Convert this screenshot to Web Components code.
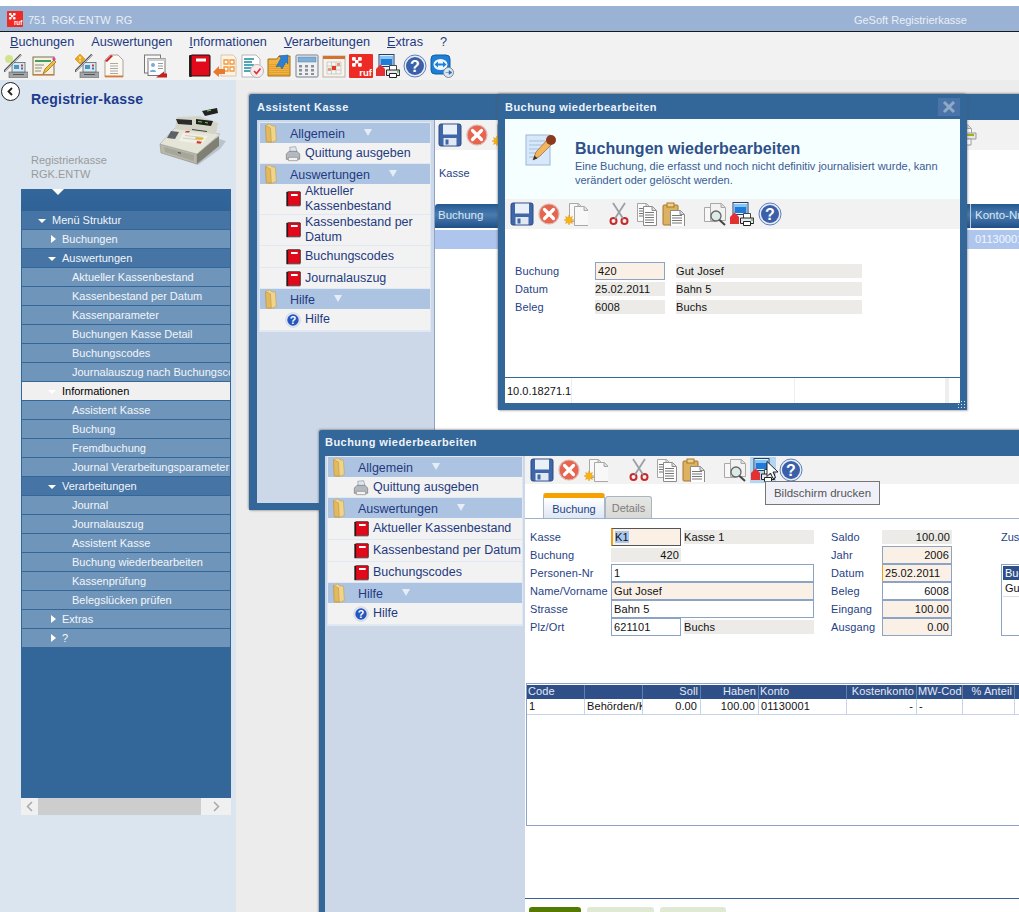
<!DOCTYPE html>
<html lang="de">
<head>
<meta charset="utf-8">
<title>GeSoft Registrierkasse</title>
<style>
html,body{margin:0;padding:0;background:#fff;overflow:hidden}
body{font:11px "Liberation Sans",Arial,sans-serif;color:#111}
</style>
</head>
<body>
<rg-app>
  <rg-titlebar slot="top" heading="751  RGK.ENTW  RG" product="GeSoft Registrierkasse"></rg-titlebar>
  <rg-menubar slot="top"></rg-menubar>
  <rg-maintools slot="top"></rg-maintools>
  <rg-sidebar slot="side"></rg-sidebar>

  <rg-window slot="desk" heading="Assistent Kasse" style="--x:13px;--y:14px;--w:800px;--h:416px;--pad:8px;--head:26px">
    <rg-split style="--pane:177px;--panepad:3px 4px 3px 3px">
      <rg-nav slot="pane">
        <rg-nav-head>Allgemein</rg-nav-head>
        <rg-nav-item icon="printer">Quittung ausgeben</rg-nav-item>
        <rg-nav-head>Auswertungen</rg-nav-head>
        <rg-nav-item icon="book">Aktueller Kassenbestand</rg-nav-item>
        <rg-nav-item icon="book">Kassenbestand per Datum</rg-nav-item>
        <rg-nav-item icon="book">Buchungscodes</rg-nav-item>
        <rg-nav-item icon="book">Journalauszug</rg-nav-item>
        <rg-nav-head>Hilfe</rg-nav-head>
        <rg-nav-item icon="helpball">Hilfe</rg-nav-item>
      </rg-nav>
      <rg-assist-main></rg-assist-main>
    </rg-split>
  </rg-window>

  <rg-window slot="desk" heading="Buchung wiederbearbeiten" closable style="--x:262px;--y:14px;--w:469px;--h:316px;--pad:7px;--head:25px;--shadow:1px">
    <rg-modal-body></rg-modal-body>
  </rg-window>

  <rg-window slot="desk" heading="Buchung wiederbearbeiten" style="--x:83px;--y:350px;--w:800px;--h:520px;--pad:6px;--head:26px;--hb:2px">
    <rg-split style="--pane:200px;--panepad:1px 3px">
      <rg-nav slot="pane">
        <rg-nav-head>Allgemein</rg-nav-head>
        <rg-nav-item icon="printer">Quittung ausgeben</rg-nav-item>
        <rg-nav-head>Auswertungen</rg-nav-head>
        <rg-nav-item icon="book">Aktueller Kassenbestand</rg-nav-item>
        <rg-nav-item icon="book">Kassenbestand per Datum</rg-nav-item>
        <rg-nav-item icon="book">Buchungscodes</rg-nav-item>
        <rg-nav-head>Hilfe</rg-nav-head>
        <rg-nav-item icon="helpball">Hilfe</rg-nav-item>
      </rg-nav>
      <rg-booking-main></rg-booking-main>
    </rg-split>
    <rg-tooltip style="--x:446px;--y:51px">Bildschirm drucken</rg-tooltip>
    <rg-cursor style="--x:447px;--y:31px"></rg-cursor>
  </rg-window>
</rg-app>

<script>
const FONT='"Liberation Sans",Arial,sans-serif';
const define=(name,css,html)=>{
  class C extends HTMLElement{
    constructor(){super();this.attachShadow({mode:'open'}).innerHTML=`<style>${css}</style>${typeof html==='string'?html:''}`;}
    connectedCallback(){
      if(typeof html==='function'){
        const s=document.createElement('div');s.innerHTML=html(this);
        this.shadowRoot.append(...s.childNodes);
      }
    }
  }
  customElements.define(name,C);
};

/* ---------- icons ---------- */
const doc=(x,y,w,h,f='#f8f8f8',s='#a8a8a8')=>`<path d="M${x+.5} ${y+.5}h${w-4}l4 4v${h-4}h-${w}z" fill="${f}" stroke="${s}"/><path d="M${x+w-4} ${y+.5}v4h4" fill="#ddd" stroke="${s}"/>`;
const lines=(x,y,w,n,c='#777',st=2.5)=>{let o='';for(let i=0;i<n;i++)o+=`<path d="M${x} ${y+i*st+.5}h${w}" stroke="${c}"/>`;return o;};
const printer=`<path d="M13.500 11.500h7v5h-7z" fill="#fff" stroke="#444"/><path d="M10.500 16h13.200v5.500H10.500z" fill="#e6e9ec" stroke="#222"/><path d="M13.500 19.500h7v4h-7z" fill="#fff" stroke="#222"/><circle cx="22" cy="17.800" r=".9" fill="#3b3"/>`;
const register=`<rect x="5" y="18" width="19" height="6" fill="#a2a4a6" stroke="#666" stroke-width=".6"/><path d="M9 20.500h11" stroke="#555"/><rect x="8" y="8.500" width="13" height="9.500" fill="#d5e8ee" stroke="#59666e" stroke-width=".8"/><rect x="10" y="11" width="5" height="4" fill="#4f93c4"/><path d="M17 10.500h2v2h-2z" fill="#c93a3a"/><path d="M17 13.500h2v2h-2z" fill="#3a6fc9"/>`;
const pen=`<path d="M0 17.500L17 .5" stroke="#555" stroke-width="2"/><path d="M1 17L17 1" stroke="#e8e8e8" stroke-width=".7"/>`;
const ICONS={
 save:`<rect x="1" y="1" width="22" height="22" rx="2" fill="#3f66a8" stroke="#2c4b85"/><rect x="5" y="1.500" width="14" height="10" fill="#eaf0f8"/><rect x="5.500" y="15" width="13" height="7.500" fill="#e2e8f2"/><rect x="7.500" y="16.500" width="3" height="5" fill="#3f66a8"/>`,
 cancel:`<circle cx="12" cy="12" r="10" fill="#e8644f" stroke="#d9b8b0" stroke-width="1.200"/><path d="M7.500 7.500l9 9m0-9l-9 9" stroke="#fff" stroke-width="3.200" stroke-linecap="round"/>`,
 newdoc:`${doc(5,1,13,18)}${doc(10,4,14,19)}<path d="M5 13l1 2.500 2.500-1-1 2.500 2.500 1-2.500 1 1 2.500-2.500-1-1 2.500-1-2.500-2.500 1 1-2.500-2.500-1 2.500-1-1-2.500 2.500 1z" fill="#f7b416" stroke="#e58a00" stroke-width=".4"/>`,
 cut:`<circle cx="6.500" cy="19" r="3" fill="none" stroke="#c62b2b" stroke-width="2"/><circle cx="17.500" cy="19" r="3" fill="none" stroke="#c62b2b" stroke-width="2"/><path d="M8 16.500L18 1M16 16.500L6 1" stroke="#9a9fa8" stroke-width="1.800"/>`,
 copy:`${doc(3,1,13,18,'#fafafa','#a5a5a5')}${lines(5,6,7,4)}${doc(9,4,13,19,'#fdfdfd','#8c8c8c')}${lines(11,10,9,5)}`,
 paste:`<rect x="2" y="3" width="15" height="20" rx="1" fill="#dcb160" stroke="#a5782b"/><rect x="6" y="1" width="7" height="4" fill="#eed18d" stroke="#a5782b"/>${doc(9,8,14,16,'#fdfdfd','#8c8c8c')}${lines(11,13,10,4)}`,
 preview:`${doc(1,5,11,14)}${doc(7,1,15,17,'#f2f2f2')}<circle cx="13" cy="14" r="5" fill="#dcebe6" stroke="#666" stroke-width="1.300"/><path d="M16.500 18l5.500 5" stroke="#444" stroke-width="2"/>`,
 screen:`<rect x="3" y=".5" width="15" height="12" fill="#e8eef6" stroke="#24406e"/><path d="M4.500 2h12v9h-12z" fill="#1f7ad8"/><path d="M4.500 2h12v3h-12z" fill="#86c6f7"/><path d="M0 15l4.500-4.500L9 15v7H0z" fill="#e33030"/>${printer}`,
 help:`<circle cx="12" cy="12" r="11" fill="#e9eef8" stroke="#5c7fbb"/><circle cx="12" cy="12" r="9" fill="#3b5fa9"/><text x="12" y="17.500" font-family="Liberation Sans" font-weight="bold" font-size="16" fill="#fff" text-anchor="middle">?</text>`,
 printdoc:`${doc(3,1,15,10)}<path d="M1 10h22v6H1z" fill="#e7e7e7" stroke="#999"/><path d="M3 11h18v2H3z" fill="#a8ae18"/><path d="M6 16h12v6H6z" fill="#fff" stroke="#999"/>`,
 book:`<rect x="2" y="1" width="3" height="22" rx="1" fill="#222"/><rect x="4" y="1" width="19" height="21" rx="1" fill="#e20a1a" stroke="#111"/><rect x="9" y="4.500" width="10" height="3" fill="#fff"/><path d="M5 22.500h18" stroke="#888"/>`,
 printer:`<path d="M7 2l9-1 2 8H8z" fill="#dfe6f0" stroke="#8a97a8"/><path d="M2 12l4-4h12l4 4v8H2z" fill="#b4b9bf" stroke="#777"/><path d="M5 17h14v5H5z" fill="#f2f2f2" stroke="#888"/>`,
 helpball:`<circle cx="12" cy="12" r="11" fill="#dfe7f3" stroke="#c6d0de"/><circle cx="12" cy="12" r="8.500" fill="#2456bd"/><text x="12" y="17.500" font-family="Liberation Sans" font-weight="bold" font-size="16" fill="#fff" text-anchor="middle">?</text>`,
 folder:`<path d="M3 3l5-2 2 2 5 1 1 17-5 2H4z" fill="#efd48c" stroke="#c5a252" stroke-width=".8"/><path d="M3 3l6 3 1 17-6-1z" fill="#e2b95e" stroke="#b58f3c" stroke-width=".6"/>`,
 cashpen:`<circle cx="5" cy="5" r="4" fill="#c9e27a" opacity=".85"/>${register}${pen}`,
 note:`<rect x="1" y="3" width="21" height="18" fill="#f5f0df" stroke="#7e6f4e"/><path d="M3 6h16v2H3z" fill="#3f9e64"/><path d="M3 11h9M3 14h7M3 17h6" stroke="#8a8a8a"/><path d="M1 20.500h21" stroke="#d9772b"/><path d="M11 20l2-5 9-9 2 2-9 9z" fill="#f2bd3a" stroke="#8b6516" stroke-width=".7"/><circle cx="22" cy="5" r="1.600" fill="#d63aa8"/>`,
 cashinfo:`${register}${pen}<path d="M5 0l5 5-5 5-5-5z" fill="#f0a818" stroke="#c07c00" stroke-width=".5"/><path d="M5 2.500v2.500M5 6v1.500" stroke="#fff" stroke-width="1.200"/>`,
 docred:`<path d="M3 6l5-5h8l5 5v17H3z" fill="#fbf8f2" stroke="#a9a39a"/><path d="M3 7l6-6 2 1-6 6z" fill="#d8202a"/><path d="M3 21.500h18v1.500H3z" fill="#e8742a"/>${lines(8,9,8,5,'#aaa',2.500)}`,
 forms:`<rect x="1.500" y="1" width="16" height="18" fill="#f8f8f8" stroke="#777"/><rect x="5" y="4.500" width="17" height="17" fill="#fdfdfd" stroke="#777"/><path d="M5 4.500h17V7H5z" fill="#cfcfcf"/><circle cx="10" cy="11" r="2" fill="#7aa9d8"/><path d="M7 18c0-3 6-3 6 0z" fill="#7aa9d8"/><path d="M13 23.500l8-6v2h3v4z" fill="#c3201e"/>${lines(15,9,5,3,'#999')}`,
 office:`<path d="M8 1h12l3 3v18H8z" fill="#fff3e3" stroke="#d9c6b2"/><path d="M11 6h4v4h-4zM17 6h4v4h-4zM11 13h4v4h-4zM17 13h4v4h-4z" fill="#fff" stroke="#ef9a3c" stroke-width="1.300"/><path d="M0 18l6-6v3h6v5H6v3z" fill="#e87a2e"/>`,
 check:`<path d="M2 1h14l4 4v18H2z" fill="#fff" stroke="#b5b5b5"/><path d="M4 5h10M4 8h8M4 11h10M4 14h7M4 17h7" stroke="#178a9e" stroke-width="1.300"/><circle cx="17" cy="17" r="6.500" fill="#fbeaea" stroke="#b9b9b9"/><path d="M14 17l2.500 2.500 4-5" fill="none" stroke="#dd2b46" stroke-width="1.600"/>`,
 folderarrow:`<path d="M1 5h9l2-3h11v20H1z" fill="#f1b342" stroke="#a46f12"/>${lines(2,10,20,6,'#e2a030',2)}<path d="M9 13l5-9-2-2 9-1 0 9-2-2-4 7-2-3z" fill="#2f7fcf" stroke="#1d5b9d" stroke-width=".5"/>`,
 calc:`<rect x="1" y="1" width="22" height="22" rx="1" fill="#eef0f2" stroke="#79808a"/><rect x="3" y="3" width="18" height="5" fill="#7fb0dc" stroke="#5c7c9c" stroke-width=".5"/><path d="M4 11h3v2.500H4zM10 11h3v2.500h-3zM16 11h3v2.500h-3zM4 15h3v2.500H4zM10 15h3v2.500h-3zM16 15h3v2.500h-3zM4 19h3v2H4zM10 19h3v2h-3zM16 19h3v2h-3z" fill="#8b9098"/>`,
 calendar:`<rect x="1" y="2" width="22" height="21" fill="#f7f4ee" stroke="#b9b4aa"/><path d="M1 2h22v3H1z" fill="#d67230"/><path d="M5 8h14M5 12h14M5 16h14M5 20h14M5 8v12M9.500 8v12M14 8v12M19 8v12" stroke="#bbb" stroke-width=".7"/><path d="M10 12h4v4h-4z" fill="#dd3c2c"/><path d="M15 9h3v3h-3zM6 14h3v3H6z" fill="#e69a7a"/>`,
 ruf:`<rect width="24" height="24" rx="1" fill="#ee2a24"/><rect x="3" y="3" width="3.800" height="3.800" rx="1" fill="#fff"/><rect x="9" y="3" width="3.800" height="3.800" rx="1" fill="#fff"/><rect x="3" y="9" width="3.800" height="3.800" rx="1" fill="#fff"/><rect x="9" y="9" width="3.800" height="3.800" rx="1" fill="#fff"/><path d="M6 6h3.500v3.500H6z" fill="#fff"/><text x="23" y="21.500" font-family="Liberation Sans" font-weight="bold" font-size="9.500" fill="#fff" text-anchor="end">ruf</text>`,
 tv:`<rect x="1" y="1" width="19" height="19" rx="4" fill="#1e7fd4" stroke="#0f5fa8"/><ellipse cx="10.500" cy="10.500" rx="7" ry="5.500" fill="#eef6fd"/><path d="M4.500 10.500l3.500-3v2h5v-2l3.500 3-3.500 3v-2H8v2z" fill="#1e7fd4"/><circle cx="18.500" cy="18.500" r="5" fill="#dfe6ee" stroke="#7a8a9c"/><path d="M15.500 18.500h3.500v-2l3 2-3 2v-2" fill="#2a6fb5" stroke="#2a6fb5" stroke-width=".5"/>`
};
define('rg-icon',`:host{display:inline-block;width:var(--s,24px);height:var(--s,24px);flex:none;line-height:0}svg{display:block;width:100%;height:100%}`,
 el=>`<svg viewBox="0 0 24 24" aria-hidden="true">${ICONS[el.getAttribute('name')]||''}</svg>`);

/* ---------- application frame ---------- */
define('rg-app',`
 :host{display:grid;grid-template-columns:236px 1fr;grid-template-rows:80px 832px;width:1019px;height:912px;overflow:hidden;font:11px ${FONT}}
 .top{grid-column:1/3;padding-top:6px;box-sizing:border-box;display:flex;flex-direction:column;background:#fff}
 .desk{position:relative;overflow:hidden;background:#ececec}
`,`<div class="top"><slot name="top"></slot></div><slot name="side"></slot><div class="desk"><slot name="desk"></slot></div>`);

define('rg-titlebar',`
 :host{display:flex;align-items:center;height:25px;background:#9ab2d3;border-bottom:1px solid #1a1a1a;color:#e9eff7;font:11px ${FONT};padding:0 52px 0 7px}
 rg-icon{--s:16px;margin-right:5px}
 .h{white-space:pre;flex:1;position:relative;top:1px;word-spacing:-.5px}
 .p{position:relative;top:1px}
`,el=>`<rg-icon name="ruf"></rg-icon><span class="h">${el.getAttribute('heading')}</span><span class="p">${el.getAttribute('product')}</span>`);

define('rg-menubar',`
 :host{display:flex;gap:17px;height:20px;align-items:center;background:#f2f2f2;padding:0 10px;font:12.700px ${FONT};color:#1f3a80}
 u{text-underline-offset:1px}
`,`<span><u>B</u>uchungen</span><span>Auswertungen</span><span><u>I</u>nformationen</span><span><u>V</u>erarbeitungen</span><span><u>E</u>xtras</span><span>?</span>`);

define('rg-maintools',`
 :host{display:flex;align-items:center;height:28px;background:#f2f2f2;padding-left:4px;box-sizing:border-box}
 rg-icon{margin-right:4px}
`,`<rg-icon name="cashpen"></rg-icon><rg-icon name="note"></rg-icon><rg-icon name="cashinfo" style="margin-left:15px;margin-right:3px"></rg-icon><rg-icon name="docred" style="margin-right:17px"></rg-icon><rg-icon name="forms" style="margin-right:20px"></rg-icon><rg-icon name="book" style="margin-right:2px"></rg-icon><rg-icon name="office" style="margin-right:3px"></rg-icon><rg-icon name="check" style="margin-right:3px"></rg-icon><rg-icon name="folderarrow" style="margin-right:4px"></rg-icon><rg-icon name="calc" style="margin-right:3px"></rg-icon><rg-icon name="calendar" style="margin-right:3px"></rg-icon><rg-icon name="ruf" style="margin-right:3px"></rg-icon><rg-icon name="screen" style="margin-right:3px"></rg-icon><rg-icon name="help" style="margin-right:3px"></rg-icon><rg-icon name="tv"></rg-icon>`);

/* ---------- sidebar ---------- */
const TREE=[
 [1,'open','dark','Menü Struktur'],[2,'closed','light','Buchungen'],[2,'open','dark','Auswertungen'],
 [3,'','light','Aktueller Kassenbestand'],[3,'','light','Kassenbestand per Datum'],[3,'','light','Kassenparameter'],[3,'','light','Buchungen Kasse Detail'],[3,'','light','Buchungscodes'],[3,'','light','Journalauszug nach Buchungscodes'],
 [2,'open','sel','Informationen'],
 [3,'','light','Assistent Kasse'],[3,'','light','Buchung'],[3,'','light','Fremdbuchung'],[3,'','light','Journal Verarbeitungsparameter'],
 [2,'open','dark','Verarbeitungen'],
 [3,'','light','Journal'],[3,'','light','Journalauszug'],[3,'','light','Assistent Kasse'],[3,'','light','Buchung wiederbearbeiten'],[3,'','light','Kassenprüfung'],[3,'','light','Belegslücken prüfen'],
 [2,'closed','light','Extras'],[2,'closed','light','?']];
define('rg-tree-row',`
 :host{display:flex;align-items:center;height:18px;margin:0 1px 1px;background:#7095ba;color:#f2f6fa;font:11px ${FONT};white-space:nowrap;overflow:hidden;box-sizing:border-box;flex:none}
 :host([variant=dark]){background:#4674a5}
 :host([variant=sel]){background:#f0f0f0;color:#000}
 :host([level="1"]){padding-left:16px}:host([level="2"]){padding-left:26px}:host([level="3"]){padding-left:50px}
 .a{width:14px;flex:none;display:flex}
 .open{width:0;height:0;border-left:4px solid transparent;border-right:4px solid transparent;border-top:4px solid #fff;margin-top:2px}
 .closed{width:0;height:0;border-top:4.500px solid transparent;border-bottom:4.500px solid transparent;border-left:5px solid #fff;margin-left:3px}
`,el=>{const s=el.getAttribute('state');return `${s?`<span class="a"><span class="${s}"></span></span>`:''}<slot></slot>`;});
define('rg-sidebar',`
 :host{display:block;background:#dbe5ef;height:832px;overflow:hidden}
 .head{height:109px;display:grid;grid-template-columns:31px 1fr;grid-template-rows:29px 1fr}
 .back{width:17px;height:17px;border:1px solid #222;border-radius:50%;background:#fff;margin:2px 0 0 1px;display:flex;align-items:center;justify-content:center}
 h1{margin:0;font:bold 14px/20px ${FONT};color:#1c3b8c;align-self:end;letter-spacing:.2px}
 .info{display:flex;justify-content:space-between;grid-column:2;height:80px}
 .cap{color:#9a9a9a;font:11px/14px ${FONT};padding-top:44px}
 .reg{width:80px;height:70px;flex:none;margin:-9px 6px 0 0}
 .panel{margin-left:21px;width:210px;height:609px;background:#336699;display:flex;flex-direction:column;overflow:hidden}
 .lead{height:22px;flex:none;position:relative;background:linear-gradient(#336699,#2f6297)}
 .lead:before{content:"";position:absolute;left:31px;top:0;border-left:6px solid transparent;border-right:6px solid transparent;border-top:6px solid #fff}
 .bar{margin-left:21px;width:210px;height:17px;background:#cdcdcd;display:flex;justify-content:space-between}
 .bar span{display:flex;align-items:center;justify-content:center;background:#f0f0f0;width:17px}
 .bar span+span{width:30px}
`,`<div class="head">
   <div class="back"><svg width="9" height="9" viewBox="0 0 9 9"><path d="M6 1L2.500 4.500 6 8" fill="none" stroke="#222" stroke-width="1.800"/></svg></div>
   <h1>Registrier-kasse</h1>
   <div class="info"><div class="cap">Registrierkasse<br>RGK.ENTW</div>
   <svg class="reg" viewBox="0 0 80 70">
     <path d="M10 52l38 13 22-16 6-8-10-3z" fill="#9da7ae" opacity=".55"/>
     <path d="M10 44l37 10v10L11 53z" fill="#b8b8aa" stroke="#8a8a7e" stroke-width=".5"/>
     <path d="M14 47l30 8v6L15 52z" fill="#a6a69a"/>
     <path d="M28 52l3 .8v1l-3-.8z" fill="#444"/>
     <path d="M47 54l22-18v10L47 64z" fill="#7f7f73"/>
     <path d="M10 44L25 28 70 34 47 54z" fill="#e4e4d7" stroke="#a5a598" stroke-width=".5"/>
     <path d="M25 29l2-12 23-1 18 7-2 11z" fill="#d4d4c6"/>
     <path d="M21 31l8 1-4 7-8-1z" fill="#5e6268"/>
     <path d="M33 33l25 3-6 8-23-3z" fill="#f0f0e6"/>
     <path d="M35 35.500l18 2M33 38l17 2" stroke="#bdbdb0" stroke-width=".7"/>
     <path d="M46 37l8 1-2 2-7-1z" fill="#e5b52c"/><path d="M47 41l5 .7-1.500 2-4-.5z" fill="#d23a30"/><path d="M36 31h4l-1 1.500h-4z" fill="#d23a30"/>
     <path d="M42 29.500l15 2" stroke="#444" stroke-width="1.200"/>
     <path d="M26 19l16 1v5l-14-1z" fill="#2a2a2a"/>
     <path d="M46 19l17 2-2 5-15-2z" fill="#1f1f1f"/>
     <path d="M52 11l15-3 1 5-13 3z" fill="#222"/>
     <path d="M57 10.500l4-.8v1l-4 .8zM48 21l4 .5v1l-4-.5zM55 22l3 .4v1l-3-.4z" fill="#6ad36a"/>
   </svg></div>
 </div>
 <div class="panel"><div class="lead"></div>${TREE.map(([l,s,v,t])=>`<rg-tree-row level="${l}" state="${s}" variant="${v}">${t}</rg-tree-row>`).join('')}</div>
 <div class="bar"><span><svg width="7" height="11" viewBox="0 0 7 11"><path d="M6 1L1.500 5.500 6 10" fill="none" stroke="#a8a8a8" stroke-width="1.500"/></svg></span><span><svg width="7" height="11" viewBox="0 0 7 11"><path d="M1 1l4.500 4.500L1 10" fill="none" stroke="#a8a8a8" stroke-width="1.500"/></svg></span></div>`);

/* ---------- windows ---------- */
define('rg-window',`
 :host{position:absolute;left:var(--x);top:var(--y);width:var(--w);height:var(--h);background:#336699;border-radius:3px 3px 0 0;box-shadow:-1px -1px 2px rgba(90,90,90,.45),1px 1px 2px rgba(90,90,90,.4);display:flex;flex-direction:column;padding:0 var(--pad) 7px;box-sizing:border-box}
 .bar{height:var(--head);box-sizing:border-box;padding-bottom:var(--hb,0);flex:none;display:flex;align-items:center;justify-content:space-between;color:#eef3f9;font:bold 11px ${FONT};letter-spacing:.45px}
 .x{width:22px;height:18px;background:#4a74a8;display:none;align-items:center;justify-content:center}
 :host([closable]) .x{display:flex}
 .grip{display:none;position:absolute;right:0;bottom:0;width:10px;height:10px;background-image:radial-gradient(#dfe8f2 .7px,transparent .8px);background-size:3px 3px}
 :host([closable]) .grip{display:block}
 .c{flex:1;min-height:0;display:flex}
 ::slotted(rg-split),::slotted(rg-modal-body){flex:1;min-width:0}
`,el=>`<div class="bar"><span>${el.getAttribute('heading')}</span><span class="x"><svg width="14" height="14" viewBox="0 0 14 14"><path d="M2 2l10 10M12 2L2 12" stroke="#8fa9c9" stroke-width="3"/></svg></span></div><div class="c"><slot></slot></div><div class="grip"></div>`);

define('rg-split',`
 :host{display:grid;grid-template-columns:var(--pane) 1fr;background:#fff;height:100%}
 .p{background:#ccd8e8;padding:var(--panepad);box-sizing:border-box}
`,`<div class="p"><slot name="pane"></slot></div><slot></slot>`);

define('rg-nav',`:host{display:block;outline:1px solid #dfe8f3;background:#f2f2f2}`,`<slot></slot>`);
define('rg-nav-head',`
 :host{display:flex;align-items:center;height:20px;background:#adc3e2;color:#1f3a80;font:12.500px ${FONT};box-shadow:0 -1px 0 #dfe8f3;margin-top:-1px;position:relative}
 :host(:first-child){margin-top:0}
 rg-icon{--s:20px;margin:0 7px 0 3px}
 span{position:relative;top:1px}
 i{margin-left:19px;width:0;height:0;border-left:4px solid transparent;border-right:4px solid transparent;border-top:7px solid #e6edf6;position:relative;top:-1px}
`,`<rg-icon name="folder"></rg-icon><span><slot></slot></span><i></i>`);
define('rg-nav-item',`
 :host{display:flex;align-items:center;min-height:22px;background:#f2f2f2;color:#1f3a80;font:12.500px/15px ${FONT};box-sizing:border-box;border-bottom:1px solid #dfe8f3;padding-left:25px}
 rg-icon{--s:16px;margin-right:4px}
`,el=>`<rg-icon name="${el.getAttribute('icon')}"></rg-icon><span><slot></slot></span>`);

/* ---------- toolbars ---------- */
define('rg-edit-tools',`
 :host{display:flex;align-items:center;height:var(--tb,30px);background:#f2f2f2;padding-left:var(--tbpad,5px);flex:none}
 .g{display:flex;gap:3px;margin-right:19px}
 .g+.g{margin-right:18px}
 .g+.g+.g{margin-right:0}
 .hot{background:#b3d6f2;width:26px;height:26px;margin:-1px -1px -1px 0;display:flex;align-items:center;justify-content:center}
 .h{margin-left:1px}
`,el=>`<div class="g"><rg-icon name="save"></rg-icon><rg-icon name="cancel"></rg-icon><rg-icon name="newdoc"></rg-icon></div>
 <div class="g"><rg-icon name="cut"></rg-icon><rg-icon name="copy"></rg-icon><rg-icon name="paste"></rg-icon></div>
 <div class="g"><rg-icon name="preview"></rg-icon>${el.hasAttribute('hot')?'<span class="hot"><rg-icon name="screen"></rg-icon></span>':'<rg-icon name="screen"></rg-icon>'}<rg-icon class="h" name="help"></rg-icon></div>
 ${el.hasAttribute('extra')?'<rg-icon name="printdoc" style="margin-left:243px"></rg-icon>':''}`);

/* ---------- fields ---------- */
define('rg-label',`:host{display:flex;align-items:center;color:#1f3f86;font:11px ${FONT};letter-spacing:.1px;white-space:nowrap}`,`<slot></slot>`);
define('rg-field',`
 :host{display:flex;align-items:center;box-sizing:border-box;height:18px;border:1.500px solid #8ba3c4;background:#fff;color:#111;font:11px ${FONT};padding:0 2px;white-space:nowrap;overflow:hidden;letter-spacing:.1px}
 :host([kind=req]){background:#faf0e6}
 :host([kind=ro]){border:0;background:#ecebe7;height:14px;margin-top:2px;padding:0 2px 0 0}
 :host([align=r]){justify-content:flex-end}
 :host([focus]){border-color:#555;border-left:2px solid #e8a020}
 :host([tick]){border-left-color:#e8a020}
 .s{background:#a8c8f0}
`,el=>el.hasAttribute('focus')?`<span class="s"><slot></slot></span>`:`<slot></slot>`);

/* ---------- modal ---------- */
define('rg-modal-body',`
 :host{display:flex;flex-direction:column;background:#fff;--tb:30px}
 .ban{height:80px;background:#f5ffff;display:flex;flex:none}
 .ic{width:70px;padding:14px 0 0 19px;box-sizing:border-box}
 .ic svg{width:33px;height:33px;display:block}
 .tx{padding-top:21px;color:#2f5089}
 h2{margin:0;font:bold 16px/18px ${FONT};letter-spacing:.05px}
 p{margin:1px 0 0;font:11px/14px ${FONT};color:#3d5a92;width:385px}
 .form{display:grid;grid-template-columns:80px 70px 11px 186px;grid-auto-rows:18px;margin:33px 0 0 10px}
 .sp{grid-column:3}
 .st{margin-top:auto;height:26px;border-top:1px solid #336699;display:grid;grid-template-columns:67px 223px 151px 3px 1fr;box-sizing:border-box;font:11px ${FONT};color:#111}
 .st div{border-right:1px solid #eee;display:flex;align-items:center;padding-left:2px}
`,`<div class="ban"><div class="ic"><svg viewBox="0 0 33 33"><rect x="2" y="2" width="24" height="30" fill="#d8e8fb" stroke="#9db6d6"/><path d="M5 8h18M5 12h18M5 16h18M5 20h12M5 24h10" stroke="#a3bfdf"/><path d="M9 27l3-8L24 6l5 4-13 13z" fill="#f2b560" stroke="#a87028" stroke-width=".8"/><path d="M9 27l1.500-4.500 3 3z" fill="#333"/><circle cx="27" cy="7" r="5" fill="#8c3a1e"/></svg></div>
   <div class="tx"><h2>Buchungen wiederbearbeiten</h2><p>Eine Buchung, die erfasst und noch nicht definitiv journalisiert wurde, kann verändert oder gelöscht werden.</p></div></div>
 <rg-edit-tools></rg-edit-tools>
 <div class="form">
  <rg-label>Buchung</rg-label><rg-field kind="req">420</rg-field><span class="sp"></span><rg-field kind="ro">Gut Josef</rg-field>
  <rg-label>Datum</rg-label><rg-field kind="ro">25.02.2011</rg-field><span class="sp"></span><rg-field kind="ro">Bahn 5</rg-field>
  <rg-label>Beleg</rg-label><rg-field kind="ro">6008</rg-field><span class="sp"></span><rg-field kind="ro">Buchs</rg-field>
 </div>
 <div class="st"><div>10.0.18271.1</div><div></div><div></div><div style="background:#eee"></div></div>`);

/* ---------- assistant main ---------- */
define('rg-assist-main',`
 :host{display:flex;flex-direction:column;background:#fff;border-left:1px solid #8ba3c4;min-width:0;overflow:hidden;--tb:30px;--tbpad:3px}
 .k{height:54px;display:flex;align-items:center;padding:0 0 8px 4px;box-sizing:border-box;color:#1f3f86;font:11px ${FONT}}
 .h,.r{display:grid;grid-template-columns:535px 1fr}
 .h{height:24px;background:linear-gradient(#24598f,#4a7cb2 45%,#1f4f86);color:#dbe6f2;font:11.500px/23px ${FONT};border-radius:3px 0 0 0;border-bottom:1px solid #fff}
 .h span{padding-left:3px}.h span+span{border-left:1px solid #b8cde2;padding-left:4px}
 .r{height:19px;margin-top:1px;background:#aec6ee;color:#f2f6fc;font:11px/19px ${FONT}}
 .r span+span{padding-left:5px}
`,`<rg-edit-tools extra></rg-edit-tools><div class="k">Kasse</div>
 <div class="h"><span>Buchung</span><span>Konto-Nr</span></div><div class="r"><span></span><span>01130001</span></div>`);

/* ---------- booking main ---------- */
define('rg-tab',`
 :host{display:flex;align-items:center;justify-content:center;box-sizing:border-box;height:22px;width:47px;background:linear-gradient(#e6e6e3,#d8d8d4);border:1px solid #a9b6c6;border-bottom:0;border-radius:3px 3px 0 0;color:#7d7d7d;font:11px ${FONT};margin-top:3px}
 :host([active]){width:62px;height:25px;margin-top:0;background:linear-gradient(#fff,#dde7f3);color:#1f3f86;border-top:5px solid #f7a100;padding-top:1px}
`,`<slot></slot>`);
define('rg-booking-table',`
 :host{display:block;margin-left:1px;height:143px;box-sizing:border-box;border:1px solid #8ba3c4;border-right:0;padding-top:1px;overflow:hidden;background:#fff}
 .r{display:grid;grid-template-columns:58px 58px 58px 58px 88px 70px 46px 52px 1fr;font:11px ${FONT}}
 .h{background:#2f4f88;color:#e3eaf4;height:14px;line-height:13px}
 .b{height:16px;line-height:14px;color:#111;border-bottom:1.500px solid #c5d5e5;box-sizing:border-box}
 .r span{padding:0 3px 0 1px;white-space:nowrap;overflow:hidden;letter-spacing:.1px}
 .h span{box-shadow:inset -1px 0 0 #5f7fae}
 .b span{border-right:1.500px solid #c5d5e5;padding-left:2px}
 .R{text-align:right}
`,`<div class="r h"><span>Code</span><span></span><span class="R">Soll</span><span class="R">Haben</span><span>Konto</span><span class="R">Kostenkonto</span><span>MW-Cod</span><span class="R">% Anteil</span><span></span></div>
 <div class="r b"><span>1</span><span style="padding-right:6px">Behörden/Kasse</span><span class="R">0.00</span><span class="R">100.00</span><span>01130001</span><span class="R">-</span><span>-</span><span></span><span></span></div>`);
define('rg-booking-main',`
 :host{display:flex;flex-direction:column;background:#fff;min-width:0;overflow:hidden;--tb:28px}
 .tabs{display:flex;height:25px;margin-top:9px;padding-left:18px;border-bottom:1px solid #9bb1cc;flex:none}
 .forms{display:flex;margin-top:9px;height:108px;padding-left:5px;flex:none}
 .f1{display:grid;grid-template-columns:81px 70px 3px 130px 1px;grid-auto-rows:18px;width:285px}
 .f2{display:grid;grid-template-columns:51px 70px;grid-auto-rows:18px;margin-left:16px;width:121px}
 .w{grid-column:2/5}.sp{grid-column:3}
 .f3{margin-left:49px;width:200px}
 .zus{height:18px;display:block;padding-top:2px;box-sizing:border-box;color:#1f3f86;font:11px/14px ${FONT}}
 .list{margin-top:18px;height:72px;border:1px solid #8ba3c4;box-sizing:border-box;padding:1px;font:11px/14px ${FONT}}
 .list div{height:14px;padding-left:2px;color:#111}
 .list .s{background:#2f4f88;color:#fff;margin-bottom:1px}
 .list .n{border-bottom:1px solid #ddd;height:15px}
 rg-booking-table{flex:none;margin-top:47px}
 .foot{margin-top:72px;border-top:1.500px solid #3c5f99;padding:8px 0 0 4px;display:flex;gap:6px;box-shadow:0 4px 6px -3px rgba(0,0,0,.1);flex:none}
 .foot span{height:30px;width:52px;background:#547a00;border-radius:3px}
 .foot span+span{background:#e0e9d3;width:67px}
 .foot span+span+span{width:66px}
`,`<rg-edit-tools hot></rg-edit-tools>
 <div class="tabs"><rg-tab active>Buchung</rg-tab><rg-tab>Details</rg-tab></div>
 <div class="forms">
  <div class="f1">
   <rg-label>Kasse</rg-label><rg-field kind="req" focus>K1</rg-field><span class="sp"></span><rg-field kind="ro">Kasse 1</rg-field><span></span>
   <rg-label>Buchung</rg-label><rg-field kind="ro" align="r">420</rg-field><span class="sp"></span><span></span><span></span>
   <rg-label>Personen-Nr</rg-label><rg-field class="w">1</rg-field><span></span>
   <rg-label>Name/Vorname</rg-label><rg-field class="w" kind="req">Gut Josef</rg-field><span></span>
   <rg-label>Strasse</rg-label><rg-field class="w">Bahn 5</rg-field><span></span>
   <rg-label>Plz/Ort</rg-label><rg-field>621101</rg-field><span class="sp"></span><rg-field kind="ro">Buchs</rg-field>
  </div>
  <div class="f2">
   <rg-label>Saldo</rg-label><rg-field kind="ro" align="r">100.00</rg-field>
   <rg-label>Jahr</rg-label><rg-field kind="req" align="r">2006</rg-field>
   <rg-label>Datum</rg-label><rg-field kind="req" tick>25.02.2011</rg-field>
   <rg-label>Beleg</rg-label><rg-field align="r">6008</rg-field>
   <rg-label>Eingang</rg-label><rg-field kind="req" align="r">100.00</rg-field>
   <rg-label>Ausgang</rg-label><rg-field kind="req" align="r">0.00</rg-field>
  </div>
  <div class="f3"><span class="zus">Zusatz</span><div class="list" style="margin-top:18px"><div class="s">Buchung</div><div class="n">Gut Josef</div></div></div>
 </div>
 <rg-booking-table></rg-booking-table>
 <div class="foot"><span></span><span></span><span></span></div>`);

/* ---------- overlays ---------- */
define('rg-tooltip',`
 :host{position:absolute;left:var(--x);top:var(--y);width:115px;height:24px;box-sizing:border-box;background:#f0f1f8;border:1px solid #767676;color:#555;font:11.500px ${FONT};display:flex;align-items:center;justify-content:center;white-space:nowrap}
`,`<slot></slot>`);
define('rg-cursor',`:host{position:absolute;left:var(--x);top:var(--y);width:14px;height:22px;line-height:0}`,
 `<svg width="14" height="22" viewBox="0 0 14 22"><path d="M1 .5v15l3.500-3.500 2.500 5.500 2.500-1-2.500-5.500h5z" fill="#fff" stroke="#111" stroke-width=".9"/></svg>`);
</script>
</body>
</html>
